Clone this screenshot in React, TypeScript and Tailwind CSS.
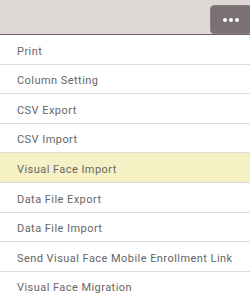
import React from "react";

const items = [
  "Print",
  "Column Setting",
  "CSV Export",
  "CSV Import",
  "Visual Face Import",
  "Data File Export",
  "Data File Import",
  "Send Visual Face Mobile Enrollment Link",
  "Visual Face Migration",
];

const App: React.FC = () => {
  return (
    <div className="w-[250px] h-[299px] overflow-hidden bg-white" style={{ fontFamily: "Roboto, 'Liberation Sans', sans-serif" }}>
      <div className="h-[35px] bg-[#ddd8d4] border-b border-[#6e6266] flex justify-end items-start pt-[5px]">
        <button className="w-[42px] h-[29px] -mr-[2px] rounded-[4px] bg-[#7b7073] border border-[#8a8083] flex items-center justify-center gap-[2px]">
          <span className="w-[4px] h-[4px] rounded-full bg-white" />
          <span className="w-[4px] h-[4px] rounded-full bg-white" />
          <span className="w-[4px] h-[4px] rounded-full bg-white" />
        </button>
      </div>
      <ul>
        {items.map((label, index) => (
          <li
            key={index}
            className={
              "h-[29.6px] flex items-center pl-[17px] pt-[5px] text-[11px] text-[#666666] tracking-[0.45px] border-b border-[#dcdcdc] " +
              (label === "Visual Face Import" ? "bg-[#f6f1c4]" : "bg-white")
            }
          >
            {label}
          </li>
        ))}
      </ul>
    </div>
  );
};

export default App;
